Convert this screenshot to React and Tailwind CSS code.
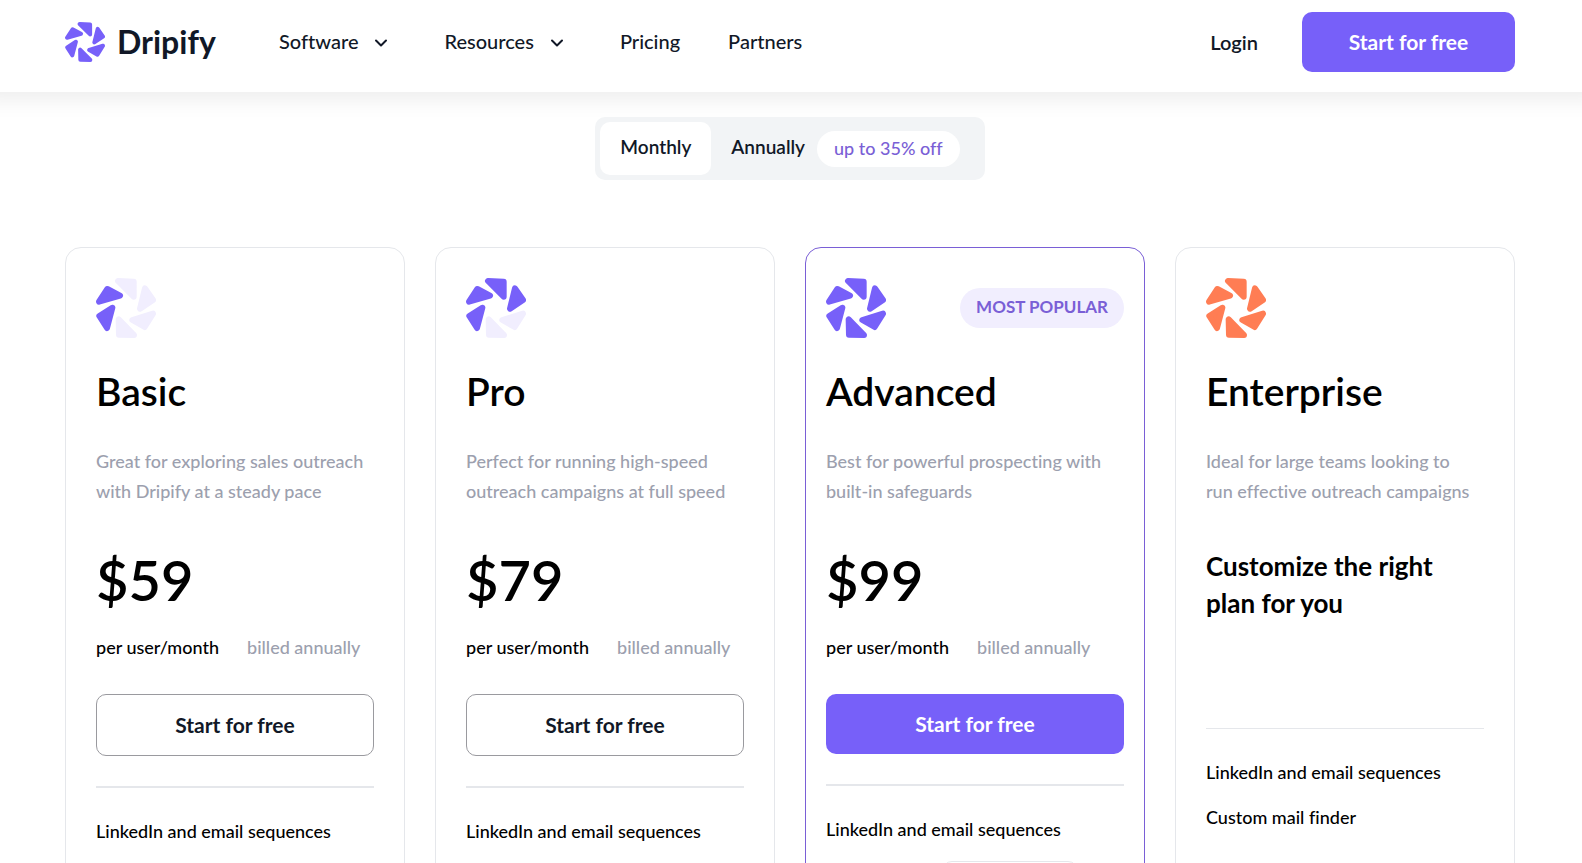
import React, { useState } from 'react';
import clsx from 'clsx';

const BLADES = [
    '49,89 10,114 33,150',
    '34,33 72,53 9,71',
    '66,9 113,11 113,56',
    '147,31 171,66 132,92',
    '68,124 69,170 114,171',
    '171,107 146,147 109,126',
];

const PLANS = [
    { name: 'Basic', blades: 2, text: 'Great for exploring sales outreach\nwith Dripify at a steady pace', price: '$59', features: ['LinkedIn and email sequences'] },
    { name: 'Pro', blades: 4, text: 'Perfect for running high-speed\noutreach campaigns at full speed', price: '$79', features: ['LinkedIn and email sequences'] },
    { name: 'Advanced', blades: 6, text: 'Best for powerful prospecting with\nbuilt-in safeguards', price: '$99', popular: true, features: ['LinkedIn and email sequences'] },
    { name: 'Enterprise', blades: 6, color: '#ff7d54', text: 'Ideal for large teams looking to\nrun effective outreach campaigns', features: ['LinkedIn and email sequences', 'Custom mail finder'] },
];

function Wheel({ count = 6, color = '#7760f9', className }) {
    return (
        <svg viewBox="0 0 180 180" className={className} strokeWidth="18" strokeLinejoin="round" aria-hidden="true">
            {BLADES.map((points, i) => (
                <polygon key={points} points={points} fill={i < count ? color : '#f1eefe'} stroke={i < count ? color : '#f1eefe'} />
            ))}
        </svg>
    );
}

function Chevron() {
    return (
        <svg viewBox="0 0 14 8" className="w-3.5 h-2 mt-1" fill="none" stroke="currentColor" strokeWidth="2" strokeLinecap="round" strokeLinejoin="round" aria-hidden="true">
            <path d="M2 1.5 L7 6.5 L12 1.5" />
        </svg>
    );
}

function Header() {
    return (
        <header className="relative bg-white shadow-[0_-12px_20px_20px_rgba(0,0,0,0.07)] pl-[65px] pr-[67px] h-[92px] pb-2 flex items-center">
            <a href="#home" className="flex items-center gap-3 w-[214px]">
                <Wheel className="w-10 h-10" />
                <span className="text-[32px] leading-10 font-bold text-[#111827]">Dripify</span>
            </a>
            <nav className="flex items-center gap-12 pb-0.5 text-xl font-medium text-[#111827]">
                <button type="button" className="flex items-center gap-4 mr-2">Software <Chevron /></button>
                <button type="button" className="flex items-center gap-4 mr-2">Resources <Chevron /></button>
                <a href="#pricing">Pricing</a>
                <a href="#partners">Partners</a>
            </nav>
            <div className="ml-auto flex items-center gap-11">
                <a href="#login" className="text-xl font-semibold text-[#111827]">Login</a>
                <button type="button" className="w-[213px] h-[60px] rounded-[10px] bg-[#7760f9] text-white text-[21px] font-bold">Start for free</button>
            </div>
        </header>
    );
}

function PlanCard({ plan }) {
    return (
        <section className={clsx('rounded-t-2xl border py-[30px] text-lg leading-[30px] font-medium', plan.popular ? 'border-[#7a5fd6] px-5' : 'border-[#e5e7eb] px-[30px]')}>
            <div className="flex items-center justify-between">
                <Wheel count={plan.blades} color={plan.color} className="w-[60px] h-[60px]" />
                {plan.popular && (
                    <span className="rounded-full bg-[#f1eefe] px-4 h-10 pb-0.5 flex items-center text-[17px] font-bold text-[#7a5fd6]">MOST POPULAR</span>
                )}
            </div>
            <h2 className="mt-7 text-[39px] leading-[50px] font-semibold text-black">{plan.name}</h2>
            <p className="mt-[30px] whitespace-pre-line text-[#9ca0ae]">{plan.text}</p>

            {plan.price ? (
                <>
                    <div className="mt-10 text-[56px] leading-[68px] font-semibold text-black">{plan.price}</div>
                    <div className="mt-[18px] flex gap-7 whitespace-nowrap">
                        <span className="text-black">per user/month</span>
                        <span className="text-[#9ca0ae]">billed annually</span>
                    </div>
                    <button
                        type="button"
                        className={clsx('mt-8 w-full rounded-[10px] text-[21px] font-bold', plan.popular ? 'h-[60px] bg-[#7760f9] text-white' : 'h-[62px] border border-[#9a9a9f] text-[#111827]')}
                    >
                        Start for free
                    </button>
                    <hr className="mt-[30px] border-t-2 border-[#e5e7eb]" />
                </>
            ) : (
                <>
                    <div className="pt-[42px] h-[222px] text-[26px] leading-[37px] font-bold text-black">Customize the right plan for you</div>
                    <hr className="border-t border-[#e5e7eb]" />
                </>
            )}

            <ul className="mt-7 flex flex-col gap-[15px] text-black">
                {plan.features.map((feature) => <li key={feature}>{feature}</li>)}
                {plan.popular && <li className="mt-0.5 ml-29 w-[136px] h-7 rounded-[10px] border border-[#e5e7eb]" />}
            </ul>
        </section>
    );
}

export default function App() {
    const [period, setPeriod] = useState('monthly');

    return (
        <div className="h-screen overflow-hidden bg-white font-[Lato,sans-serif] [font-variant-ligatures:none]">
            <Header />
            <main className="pl-[65px] pr-[67px]">
                <div className="mt-[25px] mx-auto w-fit flex rounded-[10px] bg-[#f2f4f6] p-[5px] text-[19px] text-[#111827] font-semibold">
                    <button
                        type="button"
                        aria-pressed={period === 'monthly'}
                        onClick={() => setPeriod('monthly')}
                        className={clsx('h-[53px] px-5 pb-0.5 rounded-[10px]', period === 'monthly' && 'bg-white')}
                    >
                        Monthly
                    </button>
                    <button
                        type="button"
                        aria-pressed={period === 'annually'}
                        onClick={() => setPeriod('annually')}
                        className={clsx('h-[53px] px-5 rounded-[10px] flex items-center gap-3', period === 'annually' && 'bg-white')}
                    >
                        <span className="pb-0.5">Annually</span>
                        <span className="h-9 px-[17px] pb-0.5 flex items-center rounded-full bg-white text-lg font-medium text-[#7a5fd6]">up to 35% off</span>
                    </button>
                </div>
                <div className="mt-[67px] grid grid-cols-4 gap-[30px] items-stretch">
                    {PLANS.map((plan) => <PlanCard key={plan.name} plan={plan} />)}
                </div>
            </main>
        </div>
    );
}
